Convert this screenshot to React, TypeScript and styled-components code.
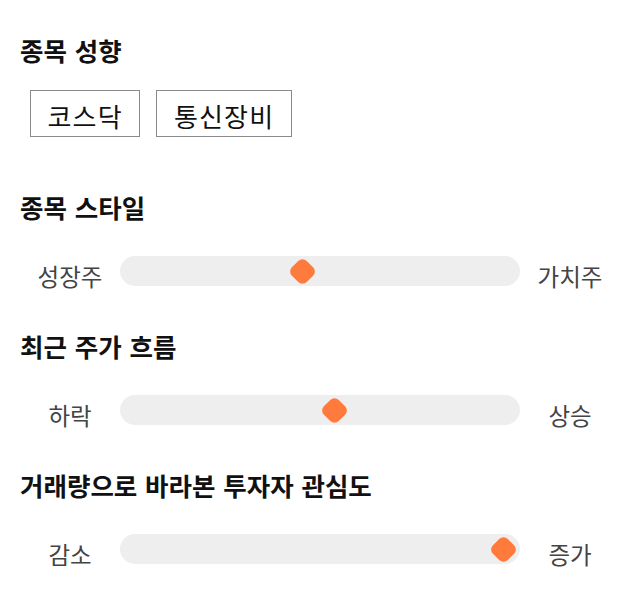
import React from "react";
import styled, { createGlobalStyle } from "styled-components";

const GlobalStyle = createGlobalStyle`
  html, body {
    margin: 0;
    padding: 0;
    background: #ffffff;
  }
  body {
    font-family: "Noto Sans CJK KR", "Noto Sans", sans-serif;
    color: #111111;
  }
`;

const Page = styled.div`
  width: 640px;
  box-sizing: border-box;
  padding: 35px 20px 40px 20px;
  display: flex;
  flex-direction: column;
`;

const Section = styled.section<{ $first?: boolean }>`
  display: flex;
  flex-direction: column;
  margin-top: ${(p) => (p.$first ? "0" : "40px")};
`;

const Heading = styled.h2`
  margin: 0;
  font-size: 25.5px;
  font-weight: 700;
  line-height: 30px;
  word-spacing: 2px;
  color: #111111;
`;

const ChipRow = styled.div`
  display: flex;
  gap: 16px;
  margin-top: 25px;
  padding-left: 10px;
  margin-bottom: 15px;
`;

const Chip = styled.button`
  box-sizing: border-box;
  height: 47px;
  padding: 4px 16.5px 0 16.5px;
  margin: 0;
  border: 1px solid #8a8a8a;
  border-radius: 0;
  background: #ffffff;
  font-family: "Noto Sans CJK KR", "Noto Sans", sans-serif;
  font-size: 26px;
  letter-spacing: 1.2px;
  line-height: 30px;
  color: #111111;
  display: flex;
  align-items: center;
`;

const SliderRow = styled.div`
  display: grid;
  grid-template-columns: 100px 400px 100px;
  align-items: center;
  margin-top: 29px;
`;

const SideLabel = styled.span`
  text-align: center;
  font-size: 23.5px;
  line-height: 30px;
  padding-top: 10px;
  color: #444444;
`;

const Track = styled.div`
  position: relative;
  height: 30px;
  border-radius: 15px;
  background: #eeeeee;
`;

const Thumb = styled.div`
  position: absolute;
  top: 50%;
  width: 21px;
  height: 21px;
  margin-left: -10.5px;
  margin-top: -10.5px;
  border-radius: 6px;
  background: #ff7a3d;
  transform: rotate(45deg);
`;

type SliderProps = { left: string; right: string; value: number };

const THUMB_MIN = 14;
const THUMB_SPAN = 372;

function Slider({ left, right, value }: SliderProps) {
  const x = THUMB_MIN + (THUMB_SPAN * value) / 100;
  return (
    <SliderRow>
      <SideLabel>{left}</SideLabel>
      <Track>
        <Thumb style={{ left: `${x}px` }} />
      </Track>
      <SideLabel>{right}</SideLabel>
    </SliderRow>
  );
}

export default function App() {
  return (
    <>
      <GlobalStyle />
      <Page>
        <Section $first>
          <Heading>종목 성향</Heading>
          <ChipRow>
            <Chip>코스닥</Chip>
            <Chip>통신장비</Chip>
          </ChipRow>
        </Section>
        <Section>
          <Heading>종목 스타일</Heading>
          <Slider left="성장주" right="가치주" value={45.4} />
        </Section>
        <Section>
          <Heading>최근 주가 흐름</Heading>
          <Slider left="하락" right="상승" value={54} />
        </Section>
        <Section>
          <Heading>거래량으로 바라본 투자자 관심도</Heading>
          <Slider left="감소" right="증가" value={99.2} />
        </Section>
      </Page>
    </>
  );
}
